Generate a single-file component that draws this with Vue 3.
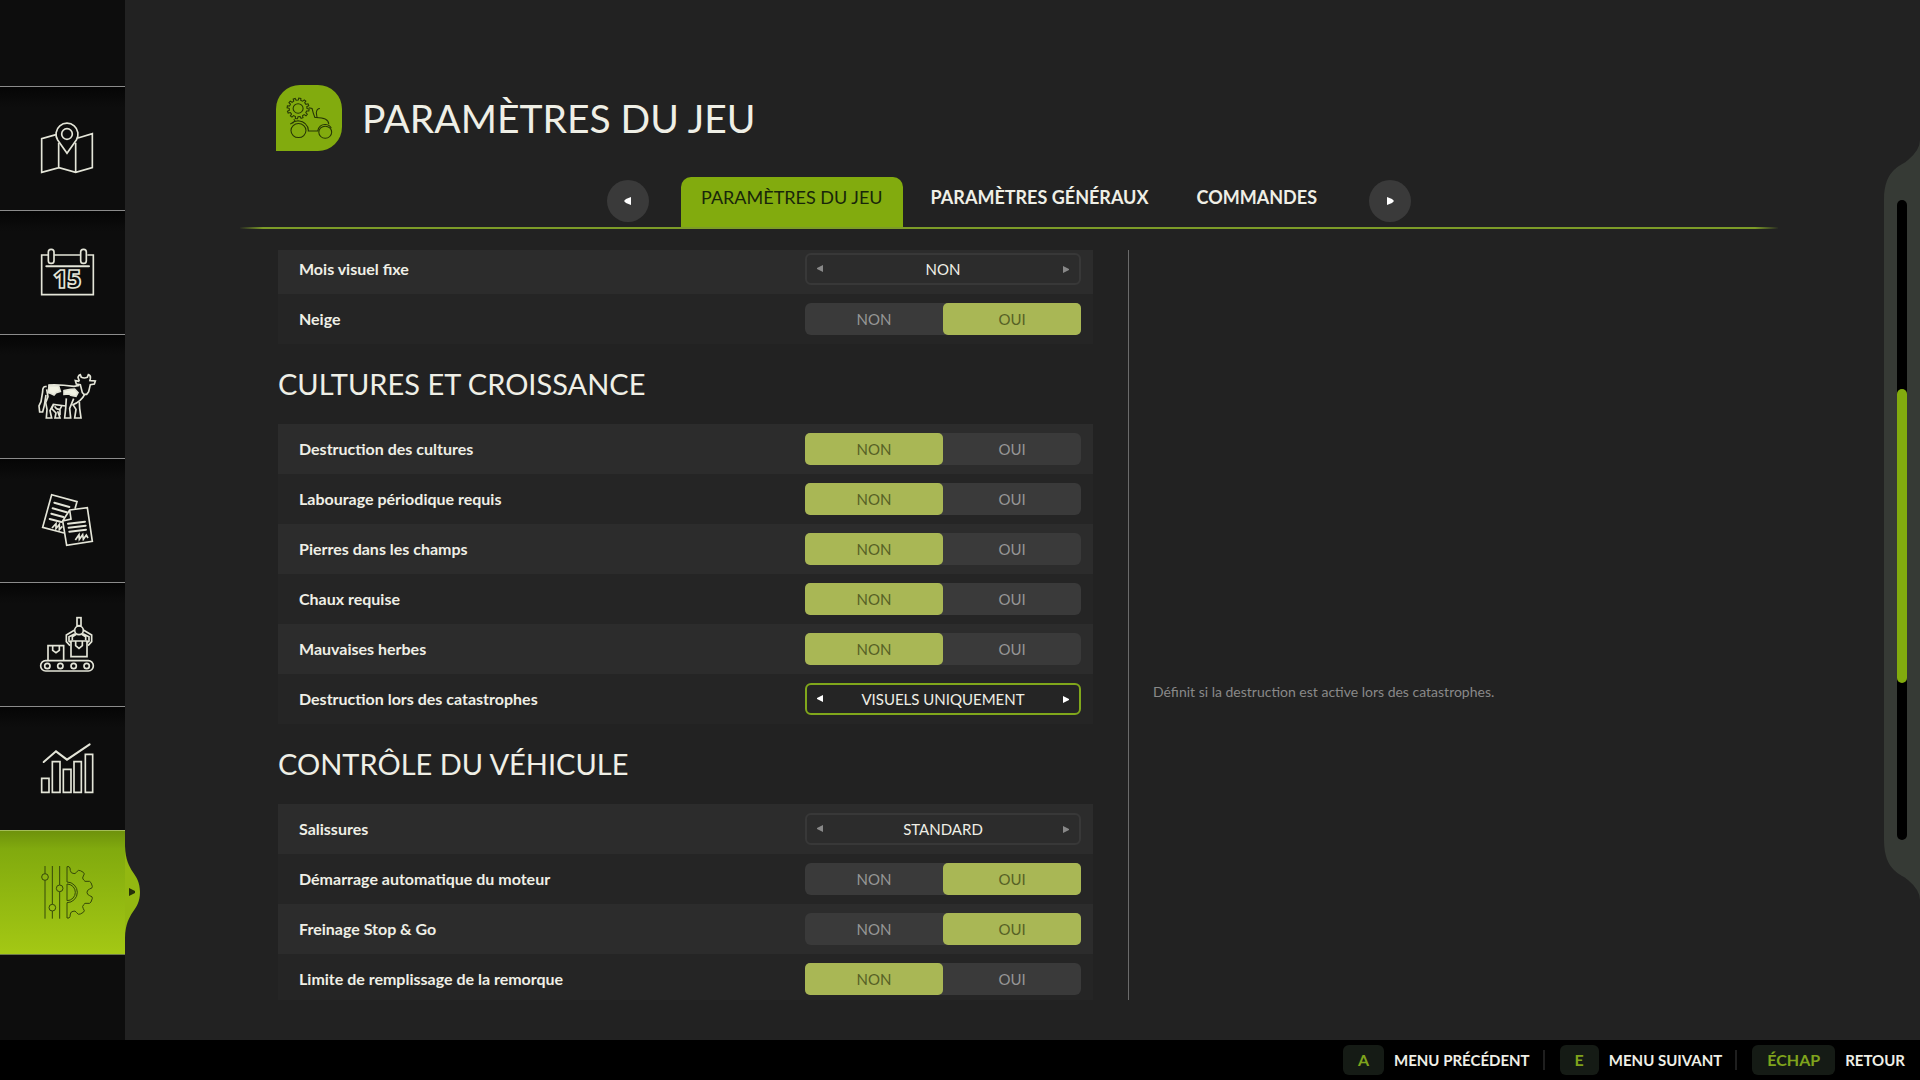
<script setup>
import { reactive, ref } from 'vue'

const menu = ['Carte', 'Calendrier', 'Animaux', 'Contrats', 'Production', 'Statistiques', 'Paramètres']
const views = [
  '108 111 189 189',
  '108 483 189 189',
  '108 75 189 189',
  '108 447 189 189',
  '108 99 189 189',
  '108 471 189 189',
  '108 843 189 189'
]
const activeMenu = ref(6)

const tabs = ['PARAMÈTRES DU JEU', 'PARAMÈTRES GÉNÉRAUX', 'COMMANDES']
const activeTab = ref(0)
const stepTab = (d) => {
  activeTab.value = (activeTab.value + d + tabs.length) % tabs.length
}

const toggle = (label, value) => ({ label, value })
const choice = (label, options, focus = false) => ({ label, options, index: 0, focus })

const sections = reactive([
  {
    rows: [
      choice('Mois visuel fixe', ['NON', 'OUI']),
      toggle('Neige', 'OUI')
    ]
  },
  {
    title: 'CULTURES ET CROISSANCE',
    rows: [
      toggle('Destruction des cultures', 'NON'),
      toggle('Labourage périodique requis', 'NON'),
      toggle('Pierres dans les champs', 'NON'),
      toggle('Chaux requise', 'NON'),
      toggle('Mauvaises herbes', 'NON'),
      choice('Destruction lors des catastrophes', ['VISUELS UNIQUEMENT', 'ACTIVÉ', 'DÉSACTIVÉ'], true)
    ]
  },
  {
    title: 'CONTRÔLE DU VÉHICULE',
    rows: [
      choice('Salissures', ['STANDARD', 'LENT', 'RAPIDE']),
      toggle('Démarrage automatique du moteur', 'OUI'),
      toggle('Freinage Stop & Go', 'OUI'),
      toggle('Limite de remplissage de la remorque', 'NON')
    ]
  }
])

const step = (row, d) => {
  row.index = (row.index + d + row.options.length) % row.options.length
}

const keys = [
  { key: 'A', text: 'MENU PRÉCÉDENT' },
  { key: 'E', text: 'MENU SUIVANT' },
  { key: 'ÉCHAP', text: 'RETOUR' }
]

const gear = (cx, cy, inner, outer, teeth) => {
  const points = []
  const pitch = (Math.PI * 2) / teeth
  for (let i = 0; i < teeth; i++) {
    for (const [f, r] of [[0.02, inner], [0.12, outer], [0.48, outer], [0.58, inner]]) {
      const a = pitch * (i + f)
      points.push(`${(cx + r * Math.cos(a)).toFixed(1)} ${(cy + r * Math.sin(a)).toFixed(1)}`)
    }
  }
  return `M${points.join('L')}Z`
}
</script>

<template>
  <div class="screen">
    <div class="body">
      <nav class="sidebar" aria-label="Menu principal">
        <button
          v-for="(name, i) in menu"
          :key="name"
          type="button"
          class="item"
          :class="{ active: i === activeMenu }"
          :aria-label="name"
          @click="activeMenu = i"
        >
          <svg class="icon" :viewBox="views[i]" aria-hidden="true">
            <g v-if="i === 0">
              <path d="M168 164L125 176V277L177 263L227 277L277 263V161L234 174M176 188V263M227 188V277" />
              <path d="M201 220L173 180A33 33 0 1 1 229 180Z" />
              <circle cx="201" cy="162" r="16" />
            </g>
            <g v-else-if="i === 1">
              <path d="M144 525H125V644H280V525H262M162 525H242" />
              <rect x="145" y="508" width="17" height="42" rx="8" />
              <rect x="242" y="508" width="17" height="42" rx="8" />
              <path class="thick" d="M139 559H267" />
              <text x="202" y="625" text-anchor="middle">15</text>
            </g>
            <g v-else-if="i === 2">
              <path d="M238 124L226 122L229 132L241 134L247 158L252 163H260L266 155L271 134L283 132L286 123L272 122M238 124L234 112Q236 105 241 104L244 112Q253 116 262 112L265 104Q273 106 271 116L269 124" />
              <path d="M145 135Q180 133 222 139L238 136M254 163Q244 184 217 195" />
              <path d="M140 140Q127 137 128 155L123 185L117 198L119 216L128 216L133 196L138 165" />
              <path d="M140 148L144 170L137 188L141 208L139 234H155L150 212L160 193L197 198" />
              <path d="M160 195L155 206L168 219L165 234H180L173 214M164 199Q170 210 180 208L185 198M180 210V226" />
              <path d="M199 175L197 205L194 234H212L209 205L221 176M219 194L228 208L224 234H243L239 205L238 186" />
              <path class="solid" d="M147 137L176 138L181 154L168 158L162 165L151 160L145 158Z" />
              <path class="solid" d="M192 152L212 148L224 147L234 158L228 169L212 166L208 162L192 163Z" />
            </g>
            <g v-else-if="i === 3">
              <path d="M192 579L128 562L155 464L231 485L225 506" />
              <path class="thick" d="M163 488L208 501M158 505L200 517M154 521L190 531M149 537L184 546" />
              <path d="M156 564L168 551V566L178 553V569L187 559" />
              <path d="M209 510L262 503L277 604L200 616L188 543ZM188 543L213 537L209 510" />
              <path class="thick" d="M204 551L255 545M206 563L257 557M208 575L258 569" />
              <path d="M226 600L237 584L238 598L248 584L250 598L259 585L264 594" />
            </g>
            <g v-else-if="i === 4">
              <rect x="122" y="242" width="158" height="31" rx="15" />
              <circle v-for="x in [142, 181, 221, 260]" :key="x" :cx="x" cy="258" r="8" />
              <path d="M144 242V197H191V242M158 197V211L168 218L178 211V197" />
              <path d="M213 183H261V230H213ZM227 183V197L237 205L247 197V183" />
              <rect x="231" y="113" width="12" height="24" />
              <circle cx="237" cy="151" r="13" />
              <path d="M224 150L199 165V185L210 197M225 161L207 170V183L213 188M250 150L275 165V185L264 197M249 161L267 170V183L261 188M217 181V170L229 163M257 181V170L245 163" />
            </g>
            <g v-else-if="i === 5">
              <path class="thick" d="M131 546L168 514L201 539L269 493" />
              <path d="M125 595H147V637H125ZM157 545H180V637H157ZM190 568H213V637H190ZM222 545H244V637H222ZM256 523H278V637H256Z" />
            </g>
            <g v-else class="dark">
              <path d="M135 858V881M135 901V1016M157 858V973M157 993V1016M179 858V915M179 935V1016" />
              <circle cx="135" cy="891" r="10" />
              <circle cx="157" cy="983" r="10" />
              <circle cx="179" cy="925" r="10" />
              <path d="M201 906V860H207Q211 862 211 872Q213 880 219 880Q226 883 229 877Q235 868 241 872L250 877Q256 881 250 888Q245 894 251 900Q254 906 261 904Q270 902 273 908L277 919Q279 924 269 927Q261 930 261 937Q261 944 269 947Q279 950 277 955L273 966Q270 972 261 970Q254 968 251 974Q245 980 250 986Q256 993 250 997L241 1002Q235 1006 229 997Q226 991 219 994Q213 994 211 1002Q211 1012 207 1014H201V968" />
              <path d="M201 906A31 31 0 0 1 201 968M201 912A25 25 0 0 1 201 962Z" />
            </g>
          </svg>
          <svg v-if="i === activeMenu" class="bump" viewBox="0 0 15 92" aria-hidden="true">
            <path d="M0 0C1 28 15 26 15 46C15 66 1 64 0 92Z" fill="#93b811" />
            <path d="M4 42L10 45V47L4 50Z" fill="#25300a" />
          </svg>
        </button>
      </nav>

      <main class="content">
        <header class="title">
          <svg class="badge" viewBox="101 75 185 197" preserveAspectRatio="none" aria-hidden="true">
            <path :d="gear(163, 145, 25, 31, 12)" />
            <circle cx="163" cy="145" r="14" />
            <circle cx="164" cy="211" r="21" />
            <circle cx="239" cy="216" r="18" />
            <path d="M193 143L202 145Q205 160 210 172Q248 171 249 192M216 172L214 158Q215 145 224 145M190 212H219M151 177L154 182L147 190M141 192Q150 183 163 182Q190 185 192 212M218 212Q222 192 240 193Q252 194 256 204" />
          </svg>
          <h1>PARAMÈTRES DU JEU</h1>
        </header>

        <nav class="tabs" aria-label="Onglets">
          <button type="button" class="round" aria-label="Onglet précédent" @click="stepTab(-1)">
            <svg viewBox="0 0 7 8"><path d="M7 0V8L2 6L0 4L2 2Z" /></svg>
          </button>
          <div class="tablist">
            <button
              v-for="(tab, i) in tabs"
              :key="tab"
              type="button"
              class="tab"
              :class="{ current: i === activeTab }"
              @click="activeTab = i"
            >{{ tab }}</button>
          </div>
          <button type="button" class="round" aria-label="Onglet suivant" @click="stepTab(1)">
            <svg viewBox="0 0 7 8"><path d="M0 0V8L5 6L7 4L5 2Z" /></svg>
          </button>
        </nav>

        <div class="panes">
          <div class="settings">
            <section v-for="(section, s) in sections" :key="s">
              <h2 v-if="section.title">{{ section.title }}</h2>
              <div v-for="row in section.rows" :key="row.label" class="row" role="group" :aria-label="row.label">
                <span class="label">{{ row.label }}</span>
                <div v-if="row.options" class="stepper" :class="{ focus: row.focus }">
                  <button type="button" aria-label="Valeur précédente" @click="step(row, -1)">
                    <svg viewBox="0 0 6 8"><path d="M6 0V7L0 4V3Z" /></svg>
                  </button>
                  <output>{{ row.options[row.index] }}</output>
                  <button type="button" aria-label="Valeur suivante" @click="step(row, 1)">
                    <svg viewBox="0 0 6 8"><path d="M0 1V8L6 5V4Z" /></svg>
                  </button>
                </div>
                <div v-else class="toggle">
                  <label v-for="value in ['NON', 'OUI']" :key="value" :class="{ on: row.value === value }">
                    <input v-model="row.value" type="radio" :name="row.label" :value="value" />{{ value }}
                  </label>
                </div>
              </div>
            </section>
          </div>
          <aside class="help">
            <p>Définit si la destruction est active lors des catastrophes.</p>
          </aside>
        </div>
      </main>

      <div class="scroll" aria-hidden="true">
        <svg class="cap" viewBox="0 0 36 60"><path d="M0 60C0 28 18 26 24 20Q36 10 36 0V60Z" /></svg>
        <div class="rail"><div class="track"><div class="thumb"></div></div></div>
        <svg class="cap" viewBox="0 0 36 60"><path d="M0 0C0 32 18 34 24 40Q36 50 36 60V0Z" /></svg>
      </div>
    </div>

    <footer class="footer">
      <button v-for="k in keys" :key="k.key" type="button" class="hint">
        <kbd>{{ k.key }}</kbd><span>{{ k.text }}</span>
      </button>
    </footer>
  </div>
</template>

<style>
body {
  margin: 0;
  background: #222;
}
</style>

<style scoped>
.screen {
  display: flex;
  flex-direction: column;
  height: 100vh;
  color: #efefe6;
  background: #222;
  font-family: Lato, "Open Sans", sans-serif;
}
button {
  padding: 0;
  border: 0;
  background: none;
  color: inherit;
  font: inherit;
  cursor: pointer;
}
svg {
  display: block;
}
.body {
  display: flex;
  flex: 1;
  min-height: 0;
}

.sidebar {
  flex: none;
  box-sizing: border-box;
  width: 125px;
  padding-top: 86px;
  background: #0d0d0d;
}
.item {
  position: relative;
  display: flex;
  align-items: center;
  box-sizing: border-box;
  width: 100%;
  height: 124px;
  padding-left: 36px;
  border-top: 1px solid #8b8b8b;
  background: linear-gradient(#050505, #0d0d0d 20px);
}
.item.active {
  height: 125px;
  border-top-color: #a4bd58;
  border-bottom: 1px solid #6d7a4a;
  background: linear-gradient(#6e920c, #81aa0e 18px, #a4c814);
}
.icon {
  width: 63px;
  height: 63px;
  overflow: visible;
  fill: none;
  stroke: #e4e5d8;
  stroke-width: 5;
}
.icon .thick {
  stroke-width: 6;
  stroke-linecap: round;
}
.icon .solid {
  fill: #f2f3e4;
}
.icon text {
  font: 800 72px "Open Sans", sans-serif;
}
.icon .dark {
  stroke: #35480a;
  stroke-width: 3;
}
.bump {
  position: absolute;
  top: 15px;
  left: 100%;
  width: 15px;
  height: 92px;
}

.content {
  display: flex;
  flex: 1;
  flex-direction: column;
  min-width: 0;
  padding: 85px 106px 40px 115px;
}
.title {
  display: flex;
  align-items: center;
  gap: 20px;
  padding-left: 36px;
}
.badge {
  width: 66px;
  height: 66px;
  border-radius: 24px 24px 24px 0;
  background: #82ab0e;
  fill: none;
  stroke: #263606;
  stroke-width: 3;
}
h1,
h2 {
  margin: 0;
  font-weight: 400;
}
h1 {
  font-size: 39px;
  line-height: 64px;
}
.tabs {
  display: flex;
  justify-content: center;
  gap: 32px;
  margin-top: 26px;
  border-bottom: 2px solid;
  border-image: linear-gradient(90deg, transparent, #7d9c28 24px, #7d9c28 calc(100% - 24px), transparent) 1;
}
.tablist {
  display: flex;
  gap: 8px;
}
.tab {
  height: 50px;
  padding: 0 20px 10px;
  border-radius: 10px 10px 0 0;
  font-size: 18px;
  font-weight: 700;
}
.tab.current {
  background: #82ab0e;
  color: #18260a;
  font-weight: 400;
}
.round {
  display: flex;
  align-items: center;
  justify-content: center;
  width: 42px;
  height: 42px;
  margin-top: 3px;
  border-radius: 50%;
  background: #3a3a3a;
  fill: #fff;
}
.round svg {
  width: 7px;
  height: 8px;
}

.panes {
  display: flex;
  flex: 1;
  min-height: 0;
  margin-top: 21px;
}
.settings {
  flex: 0 1 815px;
  margin: 0 35px 0 38px;
  overflow: hidden;
}
.settings section:first-child {
  margin-top: -6px;
}
h2 {
  font-size: 29px;
  line-height: 80px;
}
.row {
  display: flex;
  align-items: center;
  justify-content: space-between;
  box-sizing: border-box;
  height: 50px;
  padding: 0 12px 0 21px;
  background: #2c2c2c;
}
.row:nth-of-type(even) {
  background: #252525;
}
.label {
  font-size: 16px;
  line-height: 20px;
  font-weight: 700;
}
.toggle,
.stepper {
  display: flex;
  flex: none;
  box-sizing: border-box;
  width: 276px;
  height: 32px;
  border-radius: 6px;
  font-size: 15px;
}
.toggle {
  background: #3a3a3a;
}
.toggle label {
  flex: 1;
  border-radius: 5px;
  color: #969696;
  line-height: 32px;
  text-align: center;
  cursor: pointer;
}
.toggle .on {
  background: #a9b755;
  color: #566125;
}
.toggle input {
  position: absolute;
  width: 1px;
  height: 1px;
  margin: 0;
  opacity: 0;
}
.stepper {
  align-items: center;
  justify-content: space-between;
  padding: 0 10px;
  border: 2px solid #383838;
  line-height: 28px;
  fill: #888;
}
.stepper.focus {
  border-color: #80a71b;
  fill: #fff;
}
.stepper svg {
  width: 6px;
  height: 8px;
}

.help {
  display: flex;
  flex: 1;
  align-items: center;
  min-width: 0;
  padding: 132px 0 0 24px;
  border-left: 1px solid #6b6b6b;
}
.help p {
  margin: 0;
  color: #898989;
  font-size: 14px;
}

.scroll {
  display: flex;
  flex: none;
  flex-direction: column;
  width: 36px;
  margin: 140px 0;
}
.cap {
  flex: none;
  width: 36px;
  height: 60px;
  fill: #363a35;
}
.rail {
  display: flex;
  flex: 1;
  justify-content: center;
  background: #363a35;
}
.track {
  width: 10px;
  border-radius: 5px;
  background: #000;
}
.thumb {
  height: 46%;
  margin-top: 189px;
  border-radius: 5px;
  background: #82ab0e;
}

.footer {
  display: flex;
  flex: none;
  align-items: center;
  justify-content: flex-end;
  height: 40px;
  padding-right: 15px;
  background: #000;
}
.hint {
  display: flex;
  align-items: center;
  gap: 10px;
  font-size: 15px;
  font-weight: 700;
}
.hint + .hint::before {
  width: 2px;
  height: 20px;
  margin: 0 5px 0 13px;
  background: #1f1f1f;
  content: "";
}
kbd {
  padding: 0 15px;
  border-radius: 6px;
  background: #151b15;
  color: #7fa31c;
  font: inherit;
  font-size: 16px;
  line-height: 30px;
}
</style>
